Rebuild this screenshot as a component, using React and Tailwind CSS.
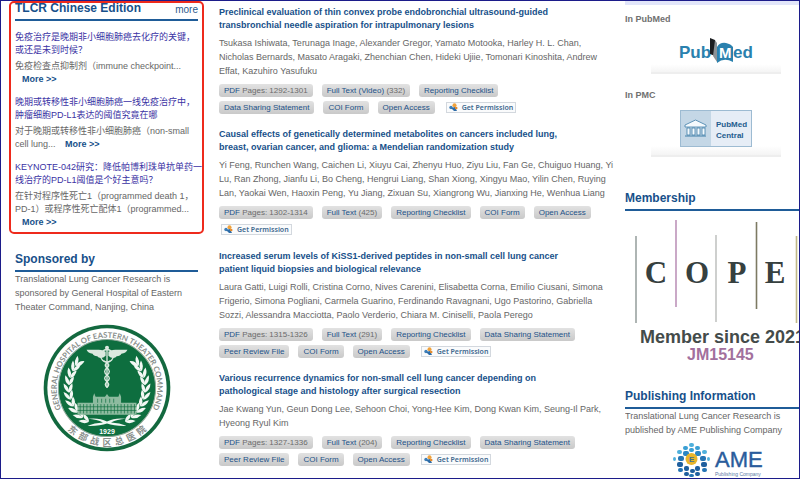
import clsx from 'clsx';

const chineseArticles = [
    {
        title: '免疫治疗是晚期非小细胞肺癌去化疗的关键，或还是未到时候？',
        excerpt: '免疫检查点抑制剂（immune checkpoint...'
    },
    {
        title: '晚期或转移性非小细胞肺癌一线免疫治疗中，肿瘤细胞PD-L1表达的阈值究竟在哪',
        excerpt: '对于晚期或转移性非小细胞肺癌（non-small cell lung...'
    },
    {
        title: 'KEYNOTE-042研究：降低帕博利珠单抗单药一线治疗的PD-L1阈值是个好主意吗？',
        excerpt: '在针对程序性死亡1（programmed death 1，PD-1）或程序性死亡配体1（programmed...'
    }
];

const articles = [
    {
        title: 'Preclinical evaluation of thin convex probe endobronchial ultrasound-guided transbronchial needle aspiration for intrapulmonary lesions',
        authors: 'Tsukasa Ishiwata, Terunaga Inage, Alexander Gregor, Yamato Motooka, Harley H. L. Chan,\nNicholas Bernards, Masato Aragaki, Zhenchian Chen, Hideki Ujiie, Tomonari Kinoshita, Andrew\nEffat, Kazuhiro Yasufuku',
        links: [
            { label: 'PDF', note: 'Pages: 1292-1301' },
            { label: 'Full Text (Video)', note: '(332)' },
            { label: 'Reporting Checklist' },
            { label: 'Data Sharing Statement' },
            { label: 'COI Form' },
            { label: 'Open Access' }
        ]
    },
    {
        title: 'Causal effects of genetically determined metabolites on cancers included lung, breast, ovarian cancer, and glioma: a Mendelian randomization study',
        authors: 'Yi Feng, Runchen Wang, Caichen Li, Xiuyu Cai, Zhenyu Huo, Ziyu Liu, Fan Ge, Chuiguo Huang, Yi\nLu, Ran Zhong, Jianfu Li, Bo Cheng, Hengrui Liang, Shan Xiong, Xingyu Mao, Yilin Chen, Ruying\nLan, Yaokai Wen, Haoxin Peng, Yu Jiang, Zixuan Su, Xiangrong Wu, Jianxing He, Wenhua Liang',
        links: [
            { label: 'PDF', note: 'Pages: 1302-1314' },
            { label: 'Full Text', note: '(425)' },
            { label: 'Reporting Checklist' },
            { label: 'COI Form' },
            { label: 'Open Access' }
        ]
    },
    {
        title: 'Increased serum levels of KiSS1-derived peptides in non-small cell lung cancer patient liquid biopsies and biological relevance',
        authors: 'Laura Gatti, Luigi Rolli, Cristina Corno, Nives Carenini, Elisabetta Corna, Emilio Ciusani, Simona\nFrigerio, Simona Pogliani, Carmela Guarino, Ferdinando Ravagnani, Ugo Pastorino, Gabriella\nSozzi, Alessandra Macciotta, Paolo Verderio, Chiara M. Ciniselli, Paola Perego',
        links: [
            { label: 'PDF', note: 'Pages: 1315-1326' },
            { label: 'Full Text', note: '(291)' },
            { label: 'Reporting Checklist' },
            { label: 'Data Sharing Statement' },
            { label: 'Peer Review File' },
            { label: 'COI Form' },
            { label: 'Open Access' }
        ]
    },
    {
        title: 'Various recurrence dynamics for non-small cell lung cancer depending on pathological stage and histology after surgical resection',
        authors: 'Jae Kwang Yun, Geun Dong Lee, Sehoon Choi, Yong-Hee Kim, Dong Kwan Kim, Seung-Il Park,\nHyeong Ryul Kim',
        links: [
            { label: 'PDF', note: 'Pages: 1327-1336' },
            { label: 'Full Text', note: '(204)' },
            { label: 'Reporting Checklist' },
            { label: 'Data Sharing Statement' },
            { label: 'Peer Review File' },
            { label: 'COI Form' },
            { label: 'Open Access' }
        ]
    }
];

const SectionTitle = ({ children, more, className }) => (
    <div className={clsx('flex items-end justify-between border-b-2 border-[#1f5c98] pb-[2px]', className)}>
        <h2 className="text-[12px] leading-[18px] font-bold text-[#17508a]">{children}</h2>
        {more && <a href="#more" className="text-[10px] leading-[14px] text-[#2b5a8c]">{more}</a>}
    </div>
);

const HospitalSeal = () => {
    const leafAngles = [118, 129, 140, 151, 162, 173, 184, 195, 206, 215];
    const hanzi = ['东', '部', '战', '区', '总', '医', '院'];

    const branch = leafAngles.map((deg) => {
        const a = (deg * Math.PI) / 180;
        const x = 232 + 114 * Math.cos(a);
        const y = 220 + 114 * Math.sin(a);
        return (
            <g key={deg} transform={`translate(${x} ${y}) rotate(${deg + 90})`}>
                <path d="M0 0 Q8 -15 29 -13 Q18 3 0 0Z" />
                <path d="M0 0 Q8 15 27 13 Q18 -3 0 0Z" />
            </g>
        );
    });

    return (
        <svg viewBox="41 29 382 382" className="size-32" role="img" aria-label="General Hospital of Eastern Theater Command">
            <circle cx="232" cy="220" r="189" fill="#13693f" />
            <circle cx="232" cy="220" r="178" fill="#fff" />
            <circle cx="232" cy="220" r="145" fill="#0e6e3f" stroke="#8fa899" strokeWidth="3" />
            <path id="seal-top" d="M 102.1 295 A 150 150 0 1 1 361.9 295" fill="none" />
            <text fontSize="23" fill="#8a8f8d" fontFamily="Lato" fontWeight="700" textAnchor="middle">
                <textPath href="#seal-top" startOffset="50%">GENERAL HOSPITAL OF EASTERN THEATER COMMAND</textPath>
            </text>
            {hanzi.map((char, i) => (
                <text
                    key={char}
                    transform={`rotate(${39 - i * 13} 232 220)`}
                    x="232"
                    y="392"
                    fontSize="27"
                    fill="#8a8f8d"
                    fontWeight="700"
                    textAnchor="middle"
                    fontFamily="Noto Sans CJK SC"
                >
                    {char}
                </text>
            ))}
            <g fill="#f3f8f4">
                <g>{branch}</g>
                <g transform="translate(464 0) scale(-1 1)">{branch}</g>
                <path d="M176 312 Q208 308 232 320 Q256 308 288 312 Q262 314 244 323 Q270 324 290 333 Q254 334 232 326 Q210 334 174 333 Q194 324 220 323 Q202 314 176 312Z" />
            </g>
            {/* caduceus */}
            <g fill="#dbe9df">
                <path d="M228 112 C214 103 195 107 171 106 Q175 116 189 118 Q192 125 203 125 Q208 133 221 129 L228 124Z" />
                <path d="M236 112 C250 103 269 107 293 106 Q289 116 275 118 Q272 125 261 125 Q256 133 243 129 L236 124Z" />
                <circle cx="232" cy="100" r="6" />
                <rect x="230" y="104" width="4" height="116" />
            </g>
            <g fill="none" stroke="#dbe9df" strokeWidth="4">
                <circle cx="232" cy="124" r="19" />
                <path d="M222 139 Q246 149 232 160 Q218 171 232 181 Q246 191 232 201 Q222 210 232 218" />
                <path d="M242 139 Q218 149 232 160 Q246 171 232 181 Q218 191 232 201 Q242 210 232 218" />
            </g>
            {/* hospital building */}
            <path
                d="M144 264 H190 V246 L194 236 L198 246 H226 L232 238 L238 246 H266 L270 236 L274 246 V264 H320 V300 H144Z"
                fill="#8dbb9f"
            />
            <g stroke="#0e6e3f" strokeWidth="2">
                {[152, 162, 172, 182, 192, 204, 214, 224, 234, 244, 254, 264, 274, 284, 294, 304, 314].map((x) => (
                    <path key={x} d={`M${x} 268 V296`} />
                ))}
                <path d="M204 252 V264 M216 252 V264 M228 252 V264 M240 252 V264 M252 252 V264" />
                <path d="M144 276 H320 M144 287 H320" />
            </g>
            <text x="232" y="356" fontSize="21" fontWeight="700" fill="#fff" textAnchor="middle" fontFamily="Liberation Sans">1929</text>
        </svg>
    );
};

const PubMedLogo = () => (
    <svg viewBox="0 0 76 30" className="h-[30px] w-[76px]" role="img" aria-label="PubMed">
        <g fontFamily="Liberation Sans" fontWeight="700" fontSize="17" fill="#2a81ae">
            <text x="1" y="24">Pub</text>
            <text x="55" y="24">ed</text>
        </g>
        <path d="M32 4 L37 6 V22 L32 20Z" fill="#1b1d20" />
        <path d="M37 6 L39 9 V28 L35 22Z" fill="#8c9296" />
        <path d="M39 13 Q42 8 48 9 Q53 10 55 13 V28 Q46 23 39 29Z" fill="#2a81ae" />
        <text x="41" y="24" fontFamily="Liberation Sans" fontWeight="700" fontSize="15" fill="#fff">M</text>
    </svg>
);

const PmcLogo = () => (
    <svg viewBox="0 0 72 37" className="h-[37px] w-[72px]" role="img" aria-label="PubMed Central">
        <rect x="0.5" y="0.5" width="71" height="36" fill="#e6edf6" stroke="#9dbbd2" />
        <rect x="1" y="1" width="30" height="35" fill="#c4d7e6" />
        <g fill="#f5fafd" stroke="#3f7ea8" strokeWidth="0.8">
            <path d="M5 15 L15.5 10 L26 15 V17 H5Z" />
            <path d="M7 18 h3 v7 h-3Z M12 18 h3 v7 h-3Z M17 18 h3 v7 h-3Z M22 18 h3 v7 h-3Z" />
        </g>
        <path d="M5 26 H26" stroke="#3f7ea8" />
        <g fontFamily="Liberation Sans" fontWeight="700" fontSize="8" fill="#235c8e">
            <text x="36" y="17">PubMed</text>
            <text x="36" y="28">Central</text>
        </g>
    </svg>
);

const CopeLogo = () => (
    <svg viewBox="0 0 190 150" className="block h-[150px] w-[190px] max-w-none" role="img" aria-label="COPE member since 2021">
        <g strokeWidth="1.6">
            <path d="M11 25 V112" stroke="#9aa3a1" />
            <path d="M51 9 V96" stroke="#bd93b9" />
            <path d="M91 24 V111" stroke="#c2c4c2" />
            <path d="M131.5 11 V98" stroke="#7d7a63" />
            <path d="M171.5 25 V112" stroke="#c0b888" />
        </g>
        <g fontFamily="Liberation Serif" fontWeight="700" fontSize="31" fill="#36403f" textAnchor="middle">
            <text x="31" y="72">C</text>
            <text x="72" y="72">O</text>
            <text x="112" y="72">P</text>
            <text x="150" y="72">E</text>
        </g>
        <g fontFamily="Liberation Sans" fontWeight="700">
            <text x="15" y="132" fontSize="18" fill="#444b4a">Member since 2021</text>
            <text x="62" y="149" fontSize="16" fill="#a2709d">JM15145</text>
        </g>
    </svg>
);

const AmeLogo = () => {
    // [x, y, width, height, color]
    const dots = [
        [16, 0, 5, 4, '#4fb0dc'],
        [10, 3, 5, 4, '#3a9fd4'], [22, 3, 5, 4, '#3a9fd4'],
        [16, 5, 5, 4, '#3a9fd4'],
        [4, 7, 5, 4, '#4fb0dc'], [10, 8, 6, 5, '#2b86c4'], [22, 8, 6, 5, '#2b86c4'], [29, 7, 5, 4, '#4fb0dc'],
        [0, 14, 3, 4, '#4fb0dc'], [5, 13, 6, 5, '#2474b4'], [27, 13, 6, 5, '#2474b4'], [34, 14, 3, 4, '#4fb0dc'],
        [4, 19, 6, 5, '#1f5f9e'], [28, 19, 6, 5, '#1f5f9e'],
        [5, 25, 5, 4, '#2474b4'], [11, 23, 5, 5, '#1f5f9e'], [22, 23, 5, 5, '#1f5f9e'], [29, 25, 5, 4, '#2474b4'],
        [11, 29, 5, 4, '#1f5f9e'], [17, 26, 5, 4, '#1f5f9e'], [22, 29, 5, 4, '#1f5f9e'],
        [16, 31, 5, 3, '#2474b4']
    ];

    return (
        <svg viewBox="0 0 94 36" className="h-9 w-[94px]" role="img" aria-label="AME Publishing Company">
            {dots.map(([x, y, w, h, fill]) => (
                <rect key={`${x}-${y}`} x={x} y={y} width={w} height={h} rx="2" fill={fill} />
            ))}
            <circle cx="18.5" cy="16" r="6" fill="#e9b52c" />
            <text x="16" y="19" fontFamily="Liberation Sans" fontWeight="700" fontSize="8" fill="#3f6f93">E</text>
            <text x="42" y="24" fontFamily="Liberation Sans" fontSize="22" fill="#2a5c9c" stroke="#2a5c9c" strokeWidth="0.4">AME</text>
            <text x="42" y="33" fontFamily="Liberation Sans" fontSize="5" fill="#5b7ba6">Publishing Company</text>
        </svg>
    );
};

const PermissionButton = () => (
    <button type="button" className="ml-[2px] flex h-[11px] items-center gap-1 border border-[#d3d8de] bg-[#fafbfc] px-[2px]">
        <svg viewBox="0 0 9 9" className="size-[9px]" aria-hidden="true">
            <circle cx="5.5" cy="2.2" r="2" fill="#f0a23c" />
            <circle cx="2" cy="4.5" r="1.7" fill="#3f7fb8" />
            <path d="M2 5 L6 4 L8 8 L5 8Z" fill="#2d6ca8" />
            <circle cx="7.2" cy="5" r="1.3" fill="#e58a2a" />
        </svg>
        <span className="font-['Noto_Sans'] text-[7px] leading-[9px] font-semibold text-[#40688f]">Get Permission</span>
    </button>
);

const Article = ({ article }) => (
    <article>
        <h3 className="pr-8 text-[9px] leading-[13px] font-bold text-[#17508a]">
            <a href="#article">{article.title}</a>
        </h3>
        <p className="mt-1 text-[9px] leading-[14px] whitespace-pre-line text-[#666]">{article.authors}</p>
        <div className="mt-1 flex flex-wrap items-center gap-x-[9px] pr-5">
            {article.links.map((link) => (
                <span key={link.label} className="flex h-[17px] items-center">
                    <a
                        href="#file"
                        className="rounded-[3px] bg-linear-to-b from-[#e2e2e2] to-[#c9c9c9] px-[5px] text-[8px] leading-[13px] whitespace-nowrap text-[#1d5288]"
                    >
                        {link.label}
                        {link.note && <span className="text-[#6b6b6b]"> {link.note}</span>}
                    </a>
                </span>
            ))}
            <span className="flex h-[17px] items-center">
                <PermissionButton />
            </span>
        </div>
    </article>
);

const IndexLink = ({ label, children }) => (
    <div>
        <p className="text-[9px] leading-[14px] font-bold text-[#707070]">{label}</p>
        <a href="#index" className="mt-2 ml-[26px] flex w-[130px] justify-center border-b-2 border-[#eeeeee] bg-linear-to-b from-white from-80% to-[#f4f4f4] pb-2">
            {children}
        </a>
    </div>
);

export default function App() {
    return (
        <div className="flex h-screen overflow-hidden border border-[#1c1c8a] bg-white font-['Liberation_Sans','Noto_Sans_CJK_SC',sans-serif]">
            {/* Left sidebar */}
            <aside className="ml-2 w-[195px] shrink-0">
                <section className="rounded-[5px] border-2 border-[#ee2a1c] px-1 pb-[3px]">
                    <SectionTitle more="more" className="-mt-1">TLCR Chinese Edition</SectionTitle>
                    <div className="mt-[10px] flex flex-col gap-[10px]">
                        {chineseArticles.map((item) => (
                            <div key={item.title} className="text-[9px] leading-[13px]">
                                <h3 className="-mr-[5px] text-[#3a32a4]">
                                    <a href="#chinese">{item.title}</a>
                                </h3>
                                <p className="mt-[3px] text-[#666]">
                                    {item.excerpt}{' '}
                                    <a href="#chinese" className="ml-[7px] font-bold whitespace-nowrap text-[#17508a]">More &gt;&gt;</a>
                                </p>
                            </div>
                        ))}
                    </div>
                </section>

                <section className="mt-4 px-[6px]">
                    <SectionTitle>Sponsored by</SectionTitle>
                    <p className="text-[9px] leading-[14px] text-[#666]">
                        Translational Lung Cancer Research is sponsored by General Hospital of Eastern Theater Command, Nanjing, China
                    </p>
                    <div className="mt-[10px] flex justify-center">
                        <HospitalSeal />
                    </div>
                </section>
            </aside>

            {/* Article list */}
            <main className="mt-[5px] ml-[15px] min-w-0 flex-1">
                <div className="flex flex-col gap-3">
                    {articles.map((article) => (
                        <Article key={article.title} article={article} />
                    ))}
                </div>
            </main>

            {/* Right sidebar */}
            <aside className="ml-2 w-[174px] shrink-0 overflow-hidden">
                <div className="h-1 bg-[#e2e6fa]" />
                <div className="mt-[7px] flex flex-col gap-[14px]">
                    <IndexLink label="In PubMed">
                        <PubMedLogo />
                    </IndexLink>
                    <IndexLink label="In PMC">
                        <PmcLogo />
                    </IndexLink>
                </div>

                <section className="mt-8">
                    <SectionTitle>Membership</SectionTitle>
                    <CopeLogo />
                </section>

                <section className="mt-[26px]">
                    <SectionTitle>Publishing Information</SectionTitle>
                    <p className="text-[9px] leading-[14px] text-[#666]">
                        Translational Lung Cancer Research is published by AME Publishing Company
                    </p>
                    <div className="mt-[6px] ml-12">
                        <AmeLogo />
                    </div>
                </section>
            </aside>
        </div>
    );
}
